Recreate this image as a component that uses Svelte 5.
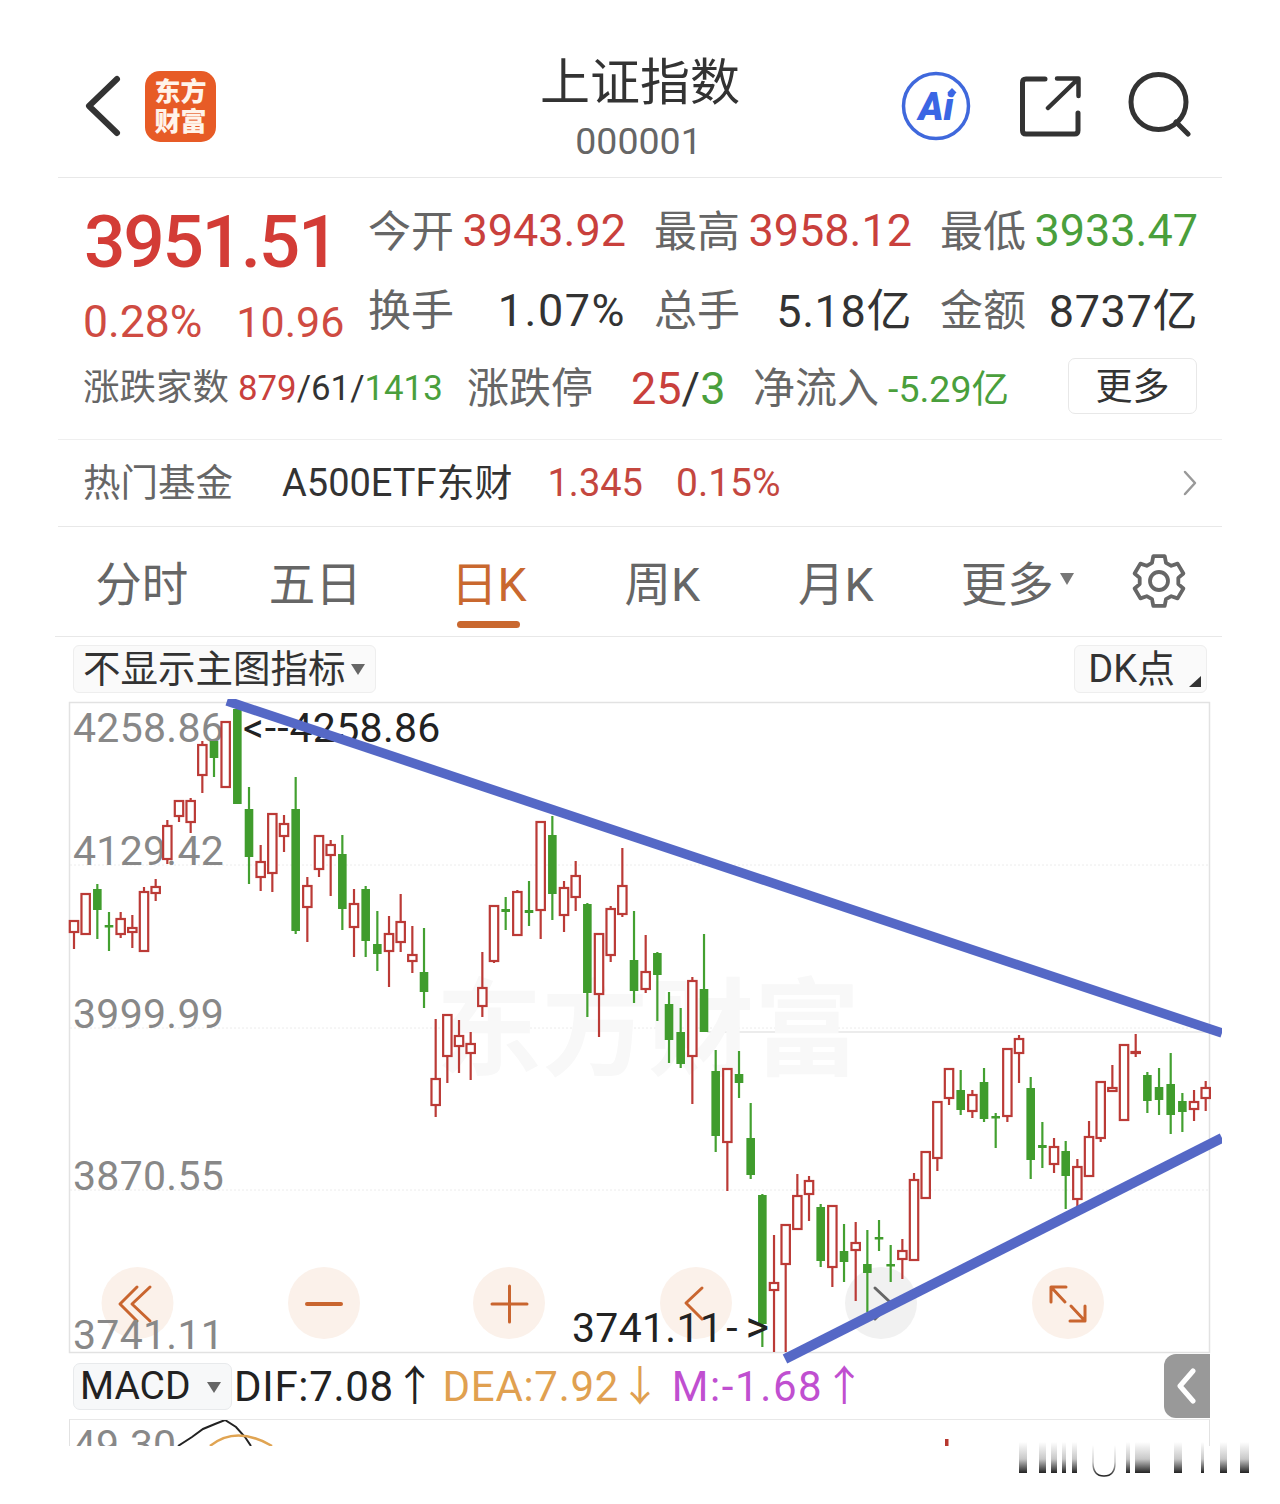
<script>
  const raw = `r 922 922 933 950|r 895 895 935 935|g 885 890 911 940|g 913 926 928 952|r 913 920 935 939|r 916 929 933 949|r 888 893 952 952|r 880 888 894 902|r 821 827 860 865|r 802 802 817 823|r 799 802 823 834|r 742 746 776 794|g 742 742 759 778|r 722 723 788 788|g 703 710 805 805|g 788 810 858 885|r 846 863 878 892|r 815 815 874 893|r 816 825 837 853|g 778 810 932 935|r 878 887 908 943|r 837 837 870 878|r 841 846 856 897|g 836 855 910 931|r 890 905 928 958|g 887 890 942 958|g 912 945 955 972|r 917 935 952 988|r 895 923 943 953|r 927 956 962 974|g 929 973 993 1009|r 1020 1080 1106 1118|r 1016 1016 1057 1084|r 1021 1037 1047 1074|r 1033 1045 1054 1081|r 953 989 1007 1018|r 907 907 962 964|g 898 910 913 931|r 891 893 936 936|g 882 911 914 927|r 823 823 911 940|g 817 836 895 921|r 882 889 916 933|r 862 877 898 912|g 904 905 994 1018|r 935 935 995 1038|r 907 910 956 963|r 849 887 915 918|g 912 961 992 1004|r 936 973 990 994|g 953 954 976 1022|g 993 1005 1041 1064|g 1009 1033 1065 1069|r 978 982 1057 1105|g 935 990 1033 1033|g 1051 1072 1137 1153|r 1070 1070 1143 1192|g 1052 1075 1084 1099|g 1104 1139 1176 1180|g 1195 1196 1325 1348|r 1236 1284 1291 1353|r 1226 1226 1265 1353|r 1175 1197 1230 1230|r 1177 1182 1195 1222|g 1205 1208 1262 1268|r 1207 1207 1268 1288|g 1225 1252 1263 1283|r 1223 1244 1251 1302|g 1231 1265 1274 1313|g 1221 1238 1239 1252|g 1246 1265 1267 1283|r 1240 1252 1260 1280|r 1174 1181 1261 1261|r 1152 1153 1199 1199|r 1103 1103 1159 1172|r 1070 1070 1099 1106|g 1071 1091 1111 1116|r 1091 1096 1112 1119|g 1069 1083 1120 1123|g 1114 1117 1119 1149|r 1050 1050 1117 1123|r 1036 1040 1054 1084|g 1078 1089 1161 1180|g 1123 1146 1149 1169|r 1139 1148 1165 1174|g 1142 1152 1177 1210|r 1160 1168 1200 1210|r 1122 1138 1177 1177|r 1083 1083 1139 1143|r 1066 1089 1092 1093|r 1046 1046 1121 1121|r 1035 1053 1054 1058|g 1073 1076 1102 1114|g 1069 1088 1101 1116|g 1054 1085 1116 1135|g 1094 1102 1113 1133|r 1091 1103 1110 1122|r 1082 1089 1099 1112`;
  const candles = raw.split('|').map((s, i) => {
    const [c, wt, bt, bb, wb] = s.split(' ');
    return { c, x: 74 + i * 11.667, wt: +wt, bt: +bt, bb: +bb, wb: +wb };
  });

  function gear(cx, cy, R, r, n) {
    const pts = [];
    for (let i = 0; i < n; i++) {
      const a = -90 + (i * 360) / n;
      [[r, -21], [R, -13], [R, 13], [r, 21]].forEach(([rad, d]) => {
        const t = ((a + d) * Math.PI) / 180;
        pts.push((cx + rad * Math.cos(t)).toFixed(1) + ',' + (cy + rad * Math.sin(t)).toFixed(1));
      });
    }
    return 'M' + pts.join('L') + 'Z';
  }
  const gearPath = gear(30, 30, 25.5, 19.5, 6);

  const axis = [
    ['4258.86', 743],
    ['4129.42', 866],
    ['3999.99', 1029],
    ['3870.55', 1191],
    ['3741.11', 1350]
  ];
  const circles = [137.5, 324, 509, 696, 881, 1068];
  const bars = [[1019, 8], [1039, 7], [1051, 6], [1062, 4], [1072, 5], [1126, 4], [1135, 15], [1174, 8], [1201, 3], [1220, 7], [1240, 9]];
</script>

<div class="page">
  <header class="head">
    <div class="head-left">
      <svg class="back" viewBox="83 71 40 70" width="40" height="70" aria-hidden="true">
        <path d="M117 79 L89 106 L117 133" fill="none" stroke="#333" stroke-width="6" stroke-linecap="round" stroke-linejoin="round" />
      </svg>
      <div class="logo"><span>东方</span><span>财富</span></div>
    </div>
    <div class="title">
      <div class="name">上证指数</div>
      <div class="code">000001</div>
    </div>
    <div class="head-right">
      <svg viewBox="901 71 70 70" width="70" height="70" aria-hidden="true">
        <circle cx="936" cy="106" r="32.5" fill="none" stroke="#3f68dc" stroke-width="3.5" />
        <text x="936" y="120" text-anchor="middle" class="ai">Ai</text>
        <path d="M952 88 l4.5 4.5 -4.5 4.5 -4.5 -4.5Z" fill="#3a66e4" />
      </svg>
      <svg viewBox="1017 71 64 70" width="64" height="70" aria-hidden="true">
        <path d="M1045 79 H1026 Q1022.500 79 1022.500 82.500 V130.500 Q1022.500 134 1026 134 H1074.500 Q1078 134 1078 130.500 V113" fill="none" stroke="#333" stroke-width="5" stroke-linecap="round" />
        <path d="M1048 108 L1078 79 M1057 78.500 H1078.500 V96" fill="none" stroke="#333" stroke-width="4.500" stroke-linecap="round" stroke-linejoin="round" />
      </svg>
      <svg viewBox="1127 71 64 70" width="64" height="70" aria-hidden="true">
        <circle cx="1158.500" cy="102" r="27.500" fill="none" stroke="#333" stroke-width="5" />
        <path d="M1176 122 L1188 134" fill="none" stroke="#333" stroke-width="5" stroke-linecap="round" />
      </svg>
    </div>
  </header>

  <section class="quote">
    <div class="quote-top">
      <div class="price">
        <div class="big">3951.51</div>
        <div class="chg"><span>0.28%</span><span class="pts">10.96</span></div>
      </div>
      <div class="stats">
        <div class="stat"><span class="lbl">今开</span><span class="red">3943.92</span></div>
        <div class="stat"><span class="lbl">最高</span><span class="red">3958.12</span></div>
        <div class="stat"><span class="lbl">最低</span><span class="green">3933.47</span></div>
        <div class="stat r2"><span class="lbl">换手</span><span class="dark turnover">1.07%</span></div>
        <div class="stat r2"><span class="lbl">总手</span><span class="dark yi">5.18亿</span></div>
        <div class="stat r2"><span class="lbl">金额</span><span class="dark yi">8737亿</span></div>
      </div>
    </div>
    <div class="breadth">
      <div class="cell c1"><span class="lbl">涨跌家数</span><span class="nums"><i class="red">879</i><i class="dark">/61/</i><i class="green">1413</i></span></div>
      <div class="cell c2"><span class="lbl">涨跌停</span><span class="limit"><i class="red">25</i><i class="dark">/</i><i class="green">3</i></span></div>
      <div class="cell c3"><span class="lbl">净流入</span><span class="flow green">-5.29亿</span></div>
      <div class="more"><span>更多</span></div>
    </div>
  </section>

  <section class="fund">
    <span class="f-lbl">热门基金</span>
    <span class="f-name">A500ETF东财</span>
    <span class="f-val">1.345</span>
    <span class="f-pct">0.15%</span>
    <svg class="f-arrow" viewBox="0 0 14 26" width="14" height="26" aria-hidden="true">
      <path d="M2 2 L12 13 L2 24" fill="none" stroke="#999" stroke-width="2.500" stroke-linecap="round" stroke-linejoin="round" />
    </svg>
  </section>

  <nav class="tabs">
    <div class="tab">分时</div>
    <div class="tab">五日</div>
    <div class="tab on">日K</div>
    <div class="tab">周K</div>
    <div class="tab">月K</div>
    <div class="tab"><span class="tab-more">更多</span></div>
    <div class="tab gear">
      <svg viewBox="0 0 60 60" width="60" height="60" aria-hidden="true">
        <path d={gearPath} fill="none" stroke="#666" stroke-width="3.800" stroke-linejoin="round" />
        <circle cx="30" cy="30" r="9" fill="none" stroke="#666" stroke-width="3.800" />
      </svg>
    </div>
  </nav>

  <div class="toolbar">
    <div class="tool">不显示主图指标<b class="tri"></b></div>
    <div class="tool dk">DK点<b class="corner"></b></div>
  </div>

  <div class="chart">
    <svg class="plot" viewBox="58 700 1164 668" width="1164" height="668" aria-hidden="true">
      <rect x="69.500" y="703.500" width="1140" height="650" fill="none" stroke="#e2e2e2" stroke-width="1.500" />
      <g stroke="#ececec" stroke-width="1" stroke-dasharray="2 2">
        <line x1="70" x2="1210" y1="866" y2="866" />
        <line x1="70" x2="1210" y1="1029" y2="1029" />
        <line x1="70" x2="1210" y1="1191" y2="1191" />
      </g>
      <line x1="707" x2="1210" y1="1033" y2="1033" stroke="#e6e6e6" stroke-width="1.500" />
      <text x="648" y="1068" text-anchor="middle" class="mark">东方财富</text>

      {#each circles as cx, i}
        <circle {cx} cy="1304" r="36" fill={i === 4 ? '#f1f1f1' : '#fbf1ea'} />
      {/each}
      <g fill="none" stroke="#c9652f" stroke-width="3" stroke-linecap="round" stroke-linejoin="round">
        <path d="M137 1288 L120 1305 L137 1322 M150 1288 L132 1305 L150 1322" />
        <path d="M307 1305 H341" stroke-width="4" />
        <path d="M492 1305 H527 M509.500 1287 V1323" />
        <path d="M702 1289 L686 1304 L702 1320" />
        <path d="M1051 1303 V1288 H1066 M1051 1288 L1065 1303 M1085 1307 V1322 H1070 M1085 1322 L1071 1307" />
      </g>
      <path d="M875 1289 L891 1304 L875 1320" fill="none" stroke="#666" stroke-width="3" stroke-linecap="round" stroke-linejoin="round" />

      {#each axis as [t, y]}
        <text x="73" {y} class="axis">{t}</text>
      {/each}

      {#each candles as k}
        <line x1={k.x} x2={k.x} y1={k.wt} y2={k.bt} class={k.c === 'r' ? 'wr' : 'wg'} />
        <line x1={k.x} x2={k.x} y1={k.bb} y2={k.wb} class={k.c === 'r' ? 'wr' : 'wg'} />
        {#if k.c === 'r'}
          <rect x={k.x - 4.200} y={k.bt} width="8.400" height={k.bb - k.bt} class="br" />
        {:else}
          <rect x={k.x - 4.300} y={k.bt} width="8.600" height={Math.max(k.bb - k.bt, 2.500)} class="bg" />
        {/if}
      {/each}

      <text x="243" y="743" class="axis dark-t"><tspan class="wide1">&lt;--</tspan>4258.86</text>
      <text x="572" y="1343" class="axis dark-t">3741.11<tspan class="wide2" dx="3">-</tspan><tspan class="arrow-head">&gt;</tspan></text>

      <line x1="227" y1="702" x2="1222" y2="1034" stroke="#5568c6" stroke-width="9.500" />
      <line x1="785" y1="1360" x2="1222" y2="1139" stroke="#5568c6" stroke-width="10" />
    </svg>
  </div>

  <div class="macd">
    <div class="macd-btn">MACD<b class="tri t2"></b></div>
    <span class="dif">DIF:7.08↑</span>
    <span class="dea">DEA:7.92↓</span>
    <span class="m">M:-1.68↑</span>
    <div class="handle">
      <svg viewBox="0 0 24 36" width="24" height="36" aria-hidden="true">
        <path d="M18 3 L5 18 L18 33" fill="none" stroke="#fff" stroke-width="5" stroke-linecap="round" stroke-linejoin="round" />
      </svg>
    </div>
  </div>

  <div class="sub">
    <span class="sub-val">49.30</span>
    <svg viewBox="69 1420 1141 28" width="1141" height="28" aria-hidden="true">
      <path d="M178 1447 L192 1438 L203 1430 L215 1425 L225 1421 L236 1428 L245 1438 L251 1447" fill="none" stroke="#222" stroke-width="2" />
      <path d="M210 1447 Q236 1426 272 1447" fill="none" stroke="#e0a452" stroke-width="2.500" />
      <rect x="945" y="1440" width="3.500" height="7" fill="#b7372f" />
    </svg>
  </div>

  <div class="footer">
    <svg class="wm" viewBox="1010 1440 250 38" width="250" height="38" aria-hidden="true">
      <defs>
        <linearGradient id="fade" x1="0" y1="0" x2="0" y2="1">
          <stop offset="0" stop-color="#fff" />
          <stop offset=".55" stop-color="#c8c8c8" />
          <stop offset="1" stop-color="#222" />
        </linearGradient>
      </defs>
      {#each bars as [x, w]}
        <rect {x} y="1442" width={w} height="31" fill="url(#fade)" />
      {/each}
      <path d="M1093 1445 V1463 Q1093 1476 1104 1476 Q1115 1476 1115 1463 V1445" fill="none" stroke="url(#fade)" stroke-width="1.500" />
    </svg>
  </div>
</div>

<style>
  :global(body) {
    margin: 0;
    background: #fff;
  }
  .page {
    position: relative;
    width: 1280px;
    height: 1504px;
    padding: 0 58px;
    box-sizing: border-box;
    overflow: hidden;
    background: #fff;
    font-family: Roboto, "Noto Sans CJK SC", sans-serif;
    color: #333;
  }
  i {
    font-style: normal;
  }
  .head {
    display: grid;
    grid-template-columns: 1fr auto 1fr;
    height: 177px;
    border-bottom: 1.5px solid #e8e8e8;
    box-sizing: content-box;
  }
  .head-left {
    display: flex;
    align-items: flex-start;
    gap: 22px;
    padding: 71px 0 0 25px;
  }
  .back {
    display: block;
  }
  .logo {
    width: 71px;
    height: 71px;
    border-radius: 15px;
    background: #e75b26;
    color: #fff3ea;
    font-size: 26px;
    font-weight: 900;
    line-height: 30px;
    display: flex;
    flex-direction: column;
    align-items: center;
    justify-content: center;
  }
  .title {
    text-align: center;
    padding-top: 54px;
  }
  .name {
    font-size: 50px;
    line-height: 58px;
    color: #333;
  }
  .code {
    font-size: 37.500px;
    line-height: 42px;
    margin-top: 8px;
    color: #666;
    margin-left: -3px;
  }
  .head-right {
    display: flex;
    justify-content: flex-end;
    align-items: flex-start;
    gap: 46px;
    padding: 71px 31px 0 0;
  }
  .ai {
    font: italic 900 38px Roboto, sans-serif;
    fill: #3a66e4;
  }
  .quote {
    height: 262px;
    padding: 0 25px;
    box-sizing: border-box;
    border-bottom: 1.5px solid #efefef;
  }
  .quote-top {
    display: grid;
    grid-template-columns: 285px 1fr;
    height: 172px;
  }
  .price {
    padding-top: 27px;
  }
  .big {
    font-size: 73px;
    line-height: 74px;
    font-weight: 500;
    letter-spacing: -2.300px;
    margin-left: 1px;
    color: #d33c36;
  }
  .chg {
    display: flex;
    gap: 34px;
    margin-top: 18px;
    font-size: 44.500px;
    line-height: 50px;
    color: #cf4b42;
  }
  .pts {
    font-size: 43px;
  }
  .stats {
    display: grid;
    grid-template-columns: repeat(3, 258px);
    grid-auto-rows: 80px;
    column-gap: 28px;
    padding-top: 12px;
  }
  .stat {
    display: flex;
    justify-content: space-between;
    align-items: center;
    font-size: 45px;
  }
  .lbl {
    font-size: 43px;
    color: #666;
    padding-bottom: 5px;
  }
  .r2 .lbl {
    padding-bottom: 6px;
  }
  .r2 .dark {
    letter-spacing: .6px;
  }
  .r2 .turnover {
    letter-spacing: 1.500px;
  }
  .yi {
    padding-bottom: 6px;
  }
  .red {
    color: #c9403c;
  }
  .green {
    color: #4a9f3c;
  }
  .dark {
    color: #333;
  }
  .breadth {
    display: grid;
    grid-template-columns: 384px 286px 315px 129px;
    align-items: center;
    height: 76px;
  }
  .cell {
    display: flex;
    align-items: center;
  }
  .c1 .lbl {
    font-size: 36.500px;
    padding-bottom: 8px;
  }
  .c1 .lbl,
  .c3 .lbl {
    margin-right: 9px;
  }
  .c2 .lbl,
  .c3 .lbl {
    font-size: 42px;
    padding-bottom: 8px;
  }
  .nums {
    font-size: 34.800px;
  }
  .flow {
    font-size: 37.500px;
    padding-bottom: 6px;
  }
  .limit {
    font-size: 45px;
    margin-left: 38px;
  }
  .more {
    height: 56px;
    margin-bottom: 4px;
    border: 1.5px solid #e8e8e8;
    border-radius: 7px;
    box-sizing: border-box;
    display: flex;
    align-items: center;
    justify-content: center;
    font-size: 37px;
    color: #333;
  }
  .more span {
    padding-bottom: 4px;
  }
  .fund {
    display: flex;
    align-items: center;
    height: 87px;
    padding: 0 25px;
    border-bottom: 1.5px solid #e8e8e8;
    box-sizing: border-box;
    font-size: 38px;
  }
  .f-lbl {
    font-size: 37.500px;
    color: #666;
    padding-bottom: 7px;
  }
  .f-name {
    margin-left: 49px;
    color: #333;
    padding-bottom: 7px;
  }
  .f-val {
    margin-left: 35px;
    color: #c4473f;
    padding-bottom: 1px;
  }
  .f-pct {
    margin-left: 33px;
    color: #c4473f;
    font-size: 39px;
    padding-bottom: 1px;
  }
  .f-arrow {
    margin-left: auto;
  }
  .tabs {
    display: grid;
    grid-template-columns: repeat(6, 173.500px) 1fr;
    height: 110px;
    margin-left: -3px;
    border-bottom: 1.5px solid #e8e8e8;
    box-sizing: border-box;
    font-size: 46.500px;
    color: #666;
  }
  .tab {
    position: relative;
    display: flex;
    align-items: center;
    justify-content: center;
    padding-bottom: 2px;
  }
  .tab.on {
    color: #c9682f;
  }
  .tab.on::after {
    content: "";
    position: absolute;
    left: 55px;
    width: 63px;
    bottom: 8px;
    height: 7px;
    border-radius: 4px;
    background: #c9682f;
  }
  .tab-more {
    position: relative;
    margin-right: 4px;
  }
  .tab-more::after {
    content: "";
    position: absolute;
    left: 99px;
    top: 26px;
    border: 7.500px solid transparent;
    border-top: 12px solid #777;
    border-bottom: 0;
  }
  .toolbar {
    display: flex;
    justify-content: space-between;
    align-items: flex-start;
    height: 63px;
    padding: 9px 15px 0;
    box-sizing: border-box;
    margin-top: -1px;
  }
  .tool {
    position: relative;
    display: flex;
    align-items: center;
    height: 48px;
    padding: 0 29px 7px 9px;
    box-sizing: border-box;
    border: 1.5px solid #eeeeee;
    border-radius: 6px;
    background: #fafafa;
    font-size: 37.500px;
    color: #333;
  }
  .tool.dk {
    padding: 0 31px 7px 13px;
    font-size: 38px;
  }
  .tri {
    position: absolute;
    right: 10px;
    top: 18px;
    border: 7px solid transparent;
    border-top: 11px solid #666;
    border-bottom: 0;
  }
  .corner {
    position: absolute;
    right: 5px;
    bottom: 5px;
    width: 12px;
    height: 11px;
    background: #333;
    clip-path: polygon(100% 0, 100% 100%, 0 100%);
  }
  .chart {
    position: relative;
    height: 654px;
  }
  .plot {
    position: absolute;
    left: 0;
    top: 0;
    z-index: 2;
    display: block;
  }
  .axis {
    font: 41px Roboto, sans-serif;
    letter-spacing: .3px;
    fill: #888;
  }
  .dark-t {
    fill: #222;
  }
  .wide1 {
    letter-spacing: 1px;
  }
  .wide2 {
    letter-spacing: 8px;
  }
  .arrow-head {
    font-size: 45px;
  }
  .mark {
    font: 700 106px "Noto Sans CJK SC", sans-serif;
    fill: #f8f8f8;
  }
  .wr {
    stroke: #bb3a36;
    stroke-width: 2.200;
  }
  .wg {
    stroke: #43a030;
    stroke-width: 2.200;
  }
  .br {
    fill: #fff;
    stroke: #bb3a36;
    stroke-width: 2.200;
  }
  .bg {
    fill: #409c2d;
  }
  .macd {
    position: relative;
    display: flex;
    align-items: center;
    height: 66px;
    padding-left: 15px;
    box-sizing: border-box;
    font-size: 42px;
  }
  .macd-btn {
    position: relative;
    width: 159px;
    height: 47px;
    padding-left: 6px;
    box-sizing: border-box;
    display: flex;
    align-items: center;
    border: 1.5px solid #e8eaec;
    border-radius: 7px;
    background: #f7f8f9;
    font-size: 39px;
    color: #222;
  }
  .t2 {
    right: 10px;
  }
  .dif,
  .dea,
  .m {
    padding-bottom: 7px;
    letter-spacing: .7px;
  }
  .dif {
    margin-left: 2px;
    color: #222;
  }
  .dea {
    margin-left: 6px;
    color: #e0a050;
  }
  .m {
    margin-left: 10px;
    color: #c04fd0;
    letter-spacing: 1.600px;
  }
  .handle {
    position: absolute;
    right: 12px;
    top: 1px;
    width: 46px;
    height: 64px;
    border-radius: 12px 0 0 12px;
    background: #999;
    display: flex;
    align-items: center;
    justify-content: center;
  }
  .sub {
    position: relative;
    margin-left: 11px;
    width: 1141px;
    height: 27px;
    box-sizing: border-box;
    overflow: hidden;
    border-top: 1.5px solid #e8e8e8;
    border-left: 1.5px solid #e2e2e2;
    border-right: 1.5px solid #e2e2e2;
  }
  .sub svg {
    position: absolute;
    left: -1.500px;
    top: -1.500px;
  }
  .sub-val {
    position: absolute;
    left: 3px;
    top: 1px;
    font-size: 41px;
    line-height: 48px;
    color: #888;
  }
  .wm {
    position: absolute;
    left: 1010px;
    top: 1440px;
  }
</style>
